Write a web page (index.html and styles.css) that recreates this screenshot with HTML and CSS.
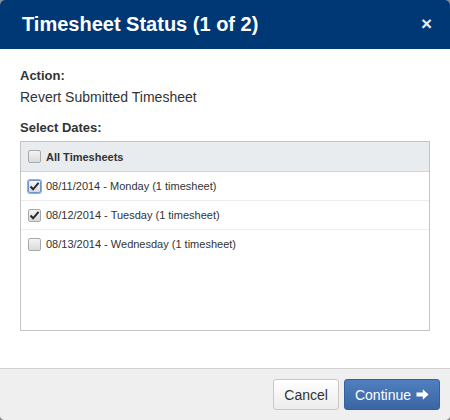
FILE: index.html
```html
<!DOCTYPE html>
<html>
<head>
<meta charset="utf-8">
<link rel="stylesheet" href="styles.css">
</head>
<body>
<div class="modal">
  <div class="modal-header">
    <h1 class="title">Timesheet Status (1 of 2)</h1>
    <span class="close">&times;</span>
  </div>
  <div class="modal-body">
    <div class="label">Action:</div>
    <div class="value">Revert Submitted Timesheet</div>
    <div class="label label-dates">Select Dates:</div>
    <div class="list">
      <div class="list-head"><span class="cb"></span>All Timesheets</div>
      <div class="row"><span class="cb cb-focus"><svg width="11" height="11" viewBox="0 0 11 11"><path d="M1.5 5.5l2.6 2.8L9.6 1.8" fill="none" stroke="#2b2b2b" stroke-width="2"/></svg></span>08/11/2014 - Monday (1 timesheet)</div>
      <div class="row"><span class="cb"><svg width="11" height="11" viewBox="0 0 11 11"><path d="M1.5 5.5l2.6 2.8L9.6 1.8" fill="none" stroke="#2b2b2b" stroke-width="2"/></svg></span>08/12/2014 - Tuesday (1 timesheet)</div>
      <div class="row"><span class="cb"></span>08/13/2014 - Wednesday (1 timesheet)</div>
    </div>
  </div>
  <div class="modal-footer">
    <button class="btn btn-default">Cancel</button>
    <button class="btn btn-primary">Continue <svg class="arrow" width="13" height="13" viewBox="0 0 13 13"><path d="M0.5 4.6h6.3V1.2L12.6 6.5 6.8 11.8V8.4H0.5z" fill="#fff"/></svg></button>
  </div>
</div>
</body>
</html>
```
FILE: styles.css
```css
html, body {
  margin: 0;
  padding: 0;
  background: #8a8a8a;
}
body {
  font-family: "Liberation Sans", Arial, sans-serif;
  width: 450px;
  height: 420px;
  overflow: hidden;
}
.modal {
  width: 450px;
  height: 420px;
  background: #fff;
  border-radius: 5px;
  overflow: hidden;
  display: flex;
  flex-direction: column;
}
.modal-header {
  height: 49px;
  background: #003876;
  display: flex;
  align-items: center;
  justify-content: space-between;
  padding: 0 18px 0 22px;
  flex-shrink: 0;
}
.title {
  margin: 0;
  color: #fff;
  font-size: 20px;
  font-weight: bold;
  padding-bottom: 1px;
}
.close {
  color: #e8ecf3;
  font-size: 19px;
  font-weight: bold;
  line-height: 1;
  padding-bottom: 2px;
}
.modal-body {
  flex: 1;
  padding: 18px 20px 0 20px;
  color: #333;
  font-size: 14px;
}
.label {
  font-weight: bold;
  font-size: 13px;
  line-height: 17px;
}
.value {
  line-height: 17px;
  margin-top: 5px;
}
.label-dates {
  margin-top: 13px;
}
.list {
  margin-top: 5px;
  height: 188px;
  border: 1px solid #c4c4c4;
  font-size: 11px;
}
.list-head {
  display: flex;
  align-items: center;
  height: 29px;
  background: #e9ecef;
  border-bottom: 1px solid #d4d4d4;
  font-weight: bold;
  padding-left: 7px;
  gap: 5px;
}
.row {
  display: flex;
  align-items: center;
  height: 28px;
  border-bottom: 1px solid #ececec;
  padding-left: 7px;
  gap: 5px;
}
.row:last-child {
  border-bottom: none;
}
.cb {
  box-sizing: border-box;
  width: 13px;
  height: 13px;
  border: 1px solid #a9a9a9;
  border-radius: 2px;
  background: linear-gradient(#f4f4f4, #dadada);
  display: flex;
  align-items: center;
  justify-content: center;
  flex-shrink: 0;
}
.cb svg {
  display: block;
}
.cb-focus {
  box-shadow: 0 0 0 1px #8cb0e6;
  border-color: #6d95d0;
}
.modal-footer {
  flex-shrink: 0;
  height: 51px;
  background: #efefef;
  border-top: 1px solid #d2d2d2;
  display: flex;
  justify-content: flex-end;
  align-items: center;
  gap: 5px;
  padding-right: 10px;
}
.btn {
  font-family: "Liberation Sans", Arial, sans-serif;
  font-size: 14px;
  height: 31px;
  border-radius: 3px;
  padding: 0 10px;
  display: flex;
  align-items: center;
  gap: 5px;
}
.btn-default {
  background: linear-gradient(#ffffff, #ececec);
  border: 1px solid #c8c8c8;
  color: #333;
}
.btn-primary {
  background: linear-gradient(#4f7fbf, #3b66a3);
  border: 1px solid #36609a;
  color: #fff;
}
.arrow {
  display: block;
}
```
